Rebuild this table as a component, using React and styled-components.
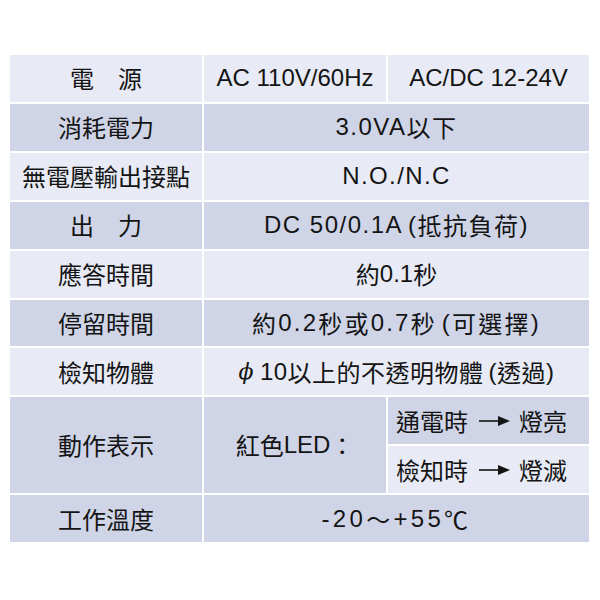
import React from 'react';
import styled, { createGlobalStyle } from 'styled-components';

const GlobalStyle = createGlobalStyle`
  html, body {
    margin: 0;
    padding: 0;
    background: #ffffff;
  }
`;

const light = '#e8ebf5';
const dark = '#cfd5e7';

const App = () => (
  <>
    <GlobalStyle />
    <Page>
      <Table>
        <Cell $row="1" $col="1"><span>電　源</span></Cell>
        <Cell $row="1" $col="2"><L>AC 110V/60Hz</L></Cell>
        <Cell $row="1" $col="3"><L>AC/DC 12-24V</L></Cell>

        <Cell $dark $row="2" $col="1"><span>消耗電力</span></Cell>
        <Cell $dark $row="2" $col="2 / 4" $ls={1.5}><L>3.0VA</L>以下</Cell>

        <Cell $row="3" $col="1"><span>無電壓輸出接點</span></Cell>
        <Cell $row="3" $col="2 / 4" $ls={1.4}><L>N.O./N.C</L></Cell>

        <Cell $dark $row="4" $col="1"><span>出　力</span></Cell>
        <Cell $dark $row="4" $col="2 / 4" $ls={1.5}>
          <L>DC 50/0.1A</L><Paren>(</Paren>抵抗負荷<L>)</L>
        </Cell>

        <Cell $row="5" $col="1"><span>應答時間</span></Cell>
        <Cell $row="5" $col="2 / 4">約<L>0.1</L>秒</Cell>

        <Cell $dark $row="6" $col="1"><span>停留時間</span></Cell>
        <Cell $dark $row="6" $col="2 / 4" $ls={2.2}>
          約<L>0.2</L>秒或<L>0.7</L>秒<Paren>(</Paren>可選擇<L>)</L>
        </Cell>

        <Cell $row="7" $col="1"><span>檢知物體</span></Cell>
        <Cell $row="7" $col="2 / 4" $ls={0.5}>
          <Phi>ϕ</Phi><L>10</L>以上的不透明物體<Paren>(</Paren>透過<L>)</L>
        </Cell>

        <Cell $dark $row="8 / 10" $col="1"><span>動作表示</span></Cell>
        <Cell $dark $row="8 / 10" $col="2">紅色<L>LED</L>：</Cell>
        <Cell $dark $left $row="8" $col="3">
          通電時<Arrow />燈亮
        </Cell>
        <Cell $left $row="9" $col="3">
          檢知時<Arrow />燈滅
        </Cell>

        <Cell $dark $row="10" $col="1"><span>工作溫度</span></Cell>
        <Cell $dark $row="10" $col="2 / 4" $ls={3.3}>
          <L>-20</L>～<L>+55</L>℃
        </Cell>
      </Table>
    </Page>
  </>
);

// small right-pointing arrow with a solid head
const Arrow = () => (
  <ArrowIcon width="32" height="12" viewBox="0 0 32 12">
    <line x1="0" y1="6" x2="21" y2="6" stroke="#141414" strokeWidth="1.6" />
    <polygon points="19,1 31,6 19,11" fill="#141414" />
  </ArrowIcon>
);

export default App;

const Page = styled.div`
  padding: 55px 0 0 10px;
`;

const Table = styled.div`
  display: grid;
  grid-template-columns: 192px 182px 201px;
  grid-template-rows: repeat(10, 1fr);
  gap: 2px;
  width: 579px;
  height: 487px;
`;

const Cell = styled.div`
  grid-row: ${({ $row }) => $row};
  grid-column: ${({ $col }) => $col};
  background: ${({ $dark }) => ($dark ? dark : light)};
  display: flex;
  align-items: center;
  justify-content: ${({ $left }) => ($left ? 'flex-start' : 'center')};
  padding-left: ${({ $left }) => ($left ? '8px' : '0')};
  font-family: "Noto Sans CJK TC", "Noto Sans CJK SC", sans-serif;
  font-size: 24px;
  letter-spacing: ${({ $ls }) => $ls || 0}px;
  color: #141414;
  white-space: pre;
  line-height: 1;
`;

const L = styled.span`
  font-family: "Liberation Sans", Arial, sans-serif;
`;

const Paren = styled(L)`
  margin-left: 5px;
`;

const Phi = styled.span`
  font-family: "DejaVu Serif", "Liberation Serif", serif;
  font-style: italic;
  font-size: 22px;
  margin-right: 6px;
`;

const ArrowIcon = styled.svg`
  margin: 0 8px 0 11px;
  flex-shrink: 0;
`;
